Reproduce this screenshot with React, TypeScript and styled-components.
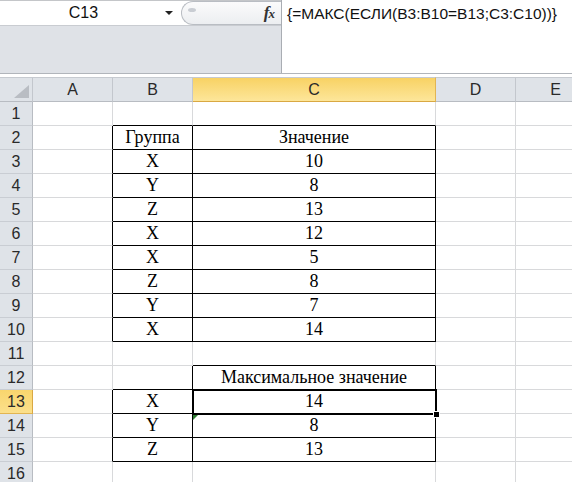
import React from 'react';
import styled, { createGlobalStyle, css } from 'styled-components';

const Global = createGlobalStyle`
  html, body { margin: 0; padding: 0; background: #fff; }
  body { width: 572px; height: 482px; overflow: hidden; font-family: 'Liberation Sans', Arial, sans-serif; }
`;

const Page = styled.div`
  width: 572px;
  height: 482px;
  overflow: hidden;
  display: flex;
  flex-direction: column;
  background: #fff;
`;

const TopBar = styled.div`
  display: flex;
  height: 74px;
  box-sizing: border-box;
  border-bottom: 1px solid #b1b5bb;
  flex-shrink: 0;
`;

const LeftPane = styled.div`
  width: 282px;
  box-sizing: border-box;
  display: flex;
  flex-direction: column;
  background: #dfe2e7;
  border-right: 1px solid #a9adb3;
`;

const NameRow = styled.div`
  display: flex;
  height: 26px;
  box-sizing: border-box;
  border-top: 1px solid #c4c6c9;
  border-bottom: 1px solid #c9ccd1;
  background: #fff;
`;

const NameBox = styled.div`
  width: 181px;
  display: flex;
  align-items: center;
  background: #fff;
`;

const NameText = styled.div`
  flex: 1;
  text-align: center;
  font-size: 16px;
  color: #111;
  padding-left: 2px;
`;

const DropArrow = styled.div`
  width: 0;
  height: 0;
  border-left: 4px solid transparent;
  border-right: 4px solid transparent;
  border-top: 4px solid #222;
  margin-right: 8px;
`;

const FxButton = styled.div`
  flex: 1;
  display: flex;
  align-items: center;
  justify-content: space-between;
  box-sizing: border-box;
  border: 1px solid #b9bdc3;
  border-right: none;
  border-radius: 13px 0 0 13px;
  background: linear-gradient(#fbfbfc, #eceef1);
  padding: 0 7px 0 6px;
`;

const Grip = styled.div`
  width: 8px;
  height: 4px;
  border-radius: 50%;
  background: #c9cdd3;
  margin-top: -7px;
`;

const FxLabel = styled.span`
  font-family: 'Liberation Serif', 'Times New Roman', serif;
  font-style: italic;
  font-weight: bold;
  font-size: 17px;
  color: #333;
  letter-spacing: -1px;
`;

const FxSub = styled.span`
  font-size: 13px;
`;

const FormulaArea = styled.div`
  flex: 1;
  background: #fff;
  font-size: 15.5px;
  line-height: 20px;
  padding: 4px 0 0 5px;
  color: #111;
  white-space: nowrap;
`;

const Gap = styled.div`
  height: 3px;
  flex-shrink: 0;
`;

const Sheet = styled.div`
  display: grid;
  grid-template-columns: 33px 80px 80px 243px 80px 80px;
  grid-template-rows: 25px repeat(16, 24px);
`;

const HeaderCell = styled.div<{ $active?: boolean; $corner?: boolean }>`
  box-sizing: border-box;
  border-top: 1px solid #c6cad0;
  border-right: 1px solid #c3c7cd;
  border-bottom: 1px solid #b8bcc2;
  background: #dfe3e8;
  display: flex;
  align-items: center;
  justify-content: center;
  font-size: 16px;
  color: #2a2a2a;
  ${(p) =>
    p.$corner &&
    css`
      align-items: flex-end;
      justify-content: flex-end;
    `}
  ${(p) =>
    p.$active &&
    css`
      background: linear-gradient(#f8d264, #fde69a);
      border-bottom-color: #d9a843;
      border-right-color: #e2b552;
    `}
`;

const CornerMark = styled.div`
  width: 0;
  height: 0;
  border-left: 15px solid transparent;
  border-bottom: 13px solid #b9bdc3;
  margin: 0 3px 3px 0;
`;

const RowHead = styled.div<{ $active?: boolean }>`
  box-sizing: border-box;
  border-right: 1px solid #b8bcc2;
  border-bottom: 1px solid #c9cdd3;
  background: #dfe3e8;
  display: flex;
  align-items: center;
  justify-content: center;
  font-size: 16px;
  color: #2a2a2a;
  ${(p) =>
    p.$active &&
    css`
      background: linear-gradient(#f9d56d, #fbe08c);
      border-right-color: #d9a843;
      border-bottom-color: #e2b552;
    `}
`;

const Cell = styled.div<{ $rb: boolean; $bb: boolean }>`
  position: relative;
  box-sizing: border-box;
  border-right: 1px solid ${(p) => (p.$rb ? '#000' : '#d8d9db')};
  border-bottom: 1px solid ${(p) => (p.$bb ? '#000' : '#d8d9db')};
  font-family: 'Liberation Serif', 'Times New Roman', serif;
  font-size: 18px;
  color: #000;
  text-align: center;
  line-height: 23px;
  white-space: nowrap;
`;

const Selection = styled.div`
  position: absolute;
  left: -1px;
  top: -1px;
  right: -2px;
  bottom: -2px;
  border: 2px solid #000;
  z-index: 1;
  pointer-events: none;
`;

const FillHandle = styled.div`
  position: absolute;
  right: -5px;
  bottom: -5px;
  width: 5px;
  height: 5px;
  background: #000;
  border: 1px solid #fff;
  z-index: 2;
`;

const ErrorMark = styled.div`
  position: absolute;
  left: 0;
  top: 0;
  width: 0;
  height: 0;
  border-top: 6px solid #2f7d32;
  border-right: 6px solid transparent;
`;

const COLS = ['A', 'B', 'C', 'D', 'E'];

const data: Record<string, string> = {
  B2: 'Группа',
  C2: 'Значение',
  B3: 'X', C3: '10',
  B4: 'Y', C4: '8',
  B5: 'Z', C5: '13',
  B6: 'X', C6: '12',
  B7: 'X', C7: '5',
  B8: 'Z', C8: '8',
  B9: 'Y', C9: '7',
  B10: 'X', C10: '14',
  C12: 'Максимальное значение',
  B13: 'X', C13: '14',
  B14: 'Y', C14: '8',
  B15: 'Z', C15: '13',
};

const inTable = (r: number, c: number) => {
  if (c === 1 || c === 2) {
    if (r >= 2 && r <= 10) return true;
    if (r >= 13 && r <= 15) return true;
  }
  if (c === 2 && r === 12) return true;
  return false;
};

export default function App() {
  const rows = Array.from({ length: 16 }, (_, i) => i + 1);
  return (
    <>
      <Global />
      <Page>
        <TopBar>
          <LeftPane>
            <NameRow>
              <NameBox>
                <NameText>C13</NameText>
                <DropArrow />
              </NameBox>
              <FxButton>
                <Grip />
                <FxLabel>
                  f<FxSub>x</FxSub>
                </FxLabel>
              </FxButton>
            </NameRow>
          </LeftPane>
          <FormulaArea>{'{=МАКС(ЕСЛИ(B3:B10=B13;C3:C10))}'}</FormulaArea>
        </TopBar>
        <Gap />
        <Sheet>
          <HeaderCell $corner>
            <CornerMark />
          </HeaderCell>
          {COLS.map((c) => (
            <HeaderCell key={c} $active={c === 'C'}>
              {c}
            </HeaderCell>
          ))}
          {rows.map((r) => (
            <React.Fragment key={r}>
              <RowHead $active={r === 13}>{r}</RowHead>
              {COLS.map((c, ci) => {
                const id = `${c}${r}`;
                const rb = inTable(r, ci) || inTable(r, ci + 1);
                const bb = inTable(r, ci) || inTable(r + 1, ci);
                return (
                  <Cell key={id} $rb={rb} $bb={bb}>
                    {data[id] ?? ''}
                    {id === 'C13' && (
                      <>
                        <Selection />
                        <FillHandle />
                      </>
                    )}
                    {id === 'C14' && <ErrorMark />}
                  </Cell>
                );
              })}
            </React.Fragment>
          ))}
        </Sheet>
      </Page>
    </>
  );
}
